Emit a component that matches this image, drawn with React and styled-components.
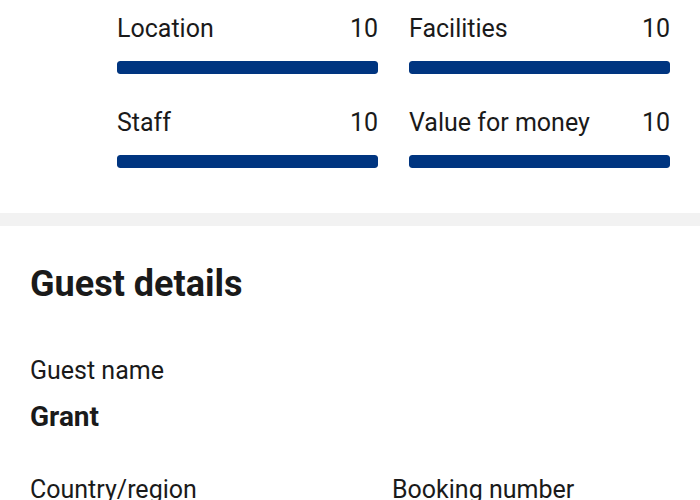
import React from 'react'
import styled, { createGlobalStyle } from 'styled-components';

const GlobalStyle = createGlobalStyle`
    body {
        margin: 0;
        background: #ffffff;
        font-family: Roboto, "Liberation Sans", Arial, sans-serif;
        color: #1a1a1a;
    }
`

const ratings = [
    { label: 'Location', score: 10 },
    { label: 'Facilities', score: 10 },
    { label: 'Staff', score: 10 },
    { label: 'Value for money', score: 10 },
]

function App() {
    return (
        <Page>
            <GlobalStyle />
            <Scores>
                {ratings.map((r) => (
                    <Rating key={r.label}>
                        <RatingHead>
                            <span>{r.label}</span>
                            <span>{r.score}</span>
                        </RatingHead>
                        <Track>
                            <Fill style={{ width: `${r.score * 10}%` }} />
                        </Track>
                    </Rating>
                ))}
            </Scores>
            <Divider />
            <Details>
                <Heading>Guest details</Heading>
                <FieldLabel>Guest name</FieldLabel>
                <FieldValue>Grant</FieldValue>
                <FieldRow>
                    <FieldLabel>Country/region</FieldLabel>
                    <FieldLabel>Booking number</FieldLabel>
                </FieldRow>
            </Details>
        </Page>
    )
}

export default App

const Page = styled.div`
    width: 700px;
    height: 500px;
    overflow: hidden;
`
const Scores = styled.section`
    display: grid;
    grid-template-columns: 261px 261px;
    column-gap: 31px;
    row-gap: 35px;
    padding: 15px 30px 45px 117px;
`
const Rating = styled.div`
    display: flex;
    flex-direction: column;
`
const RatingHead = styled.div`
    display: flex;
    justify-content: space-between;
    font-size: 25px;
    line-height: 28px;
    margin-bottom: 18px;
`
const Track = styled.div`
    height: 13px;
    border-radius: 3px;
    background: #e6e6e6;
    overflow: hidden;
`
const Fill = styled.div`
    height: 100%;
    background: #003580;
    border-radius: 3px;
`
const Divider = styled.div`
    height: 13px;
    background: #f2f2f2;
`
const Details = styled.section`
    padding: 37px 30px 0 30px;
`
const Heading = styled.h2`
    margin: 0 0 50px;
    font-size: 36px;
    line-height: 43px;
    font-weight: 700;
`
const FieldLabel = styled.div`
    font-size: 25px;
    line-height: 30px;
`
const FieldValue = styled.div`
    margin-top: 14px;
    font-size: 28px;
    line-height: 34px;
    font-weight: 700;
`
const FieldRow = styled.div`
    display: grid;
    grid-template-columns: 362px 1fr;
    margin-top: 41px;
`
